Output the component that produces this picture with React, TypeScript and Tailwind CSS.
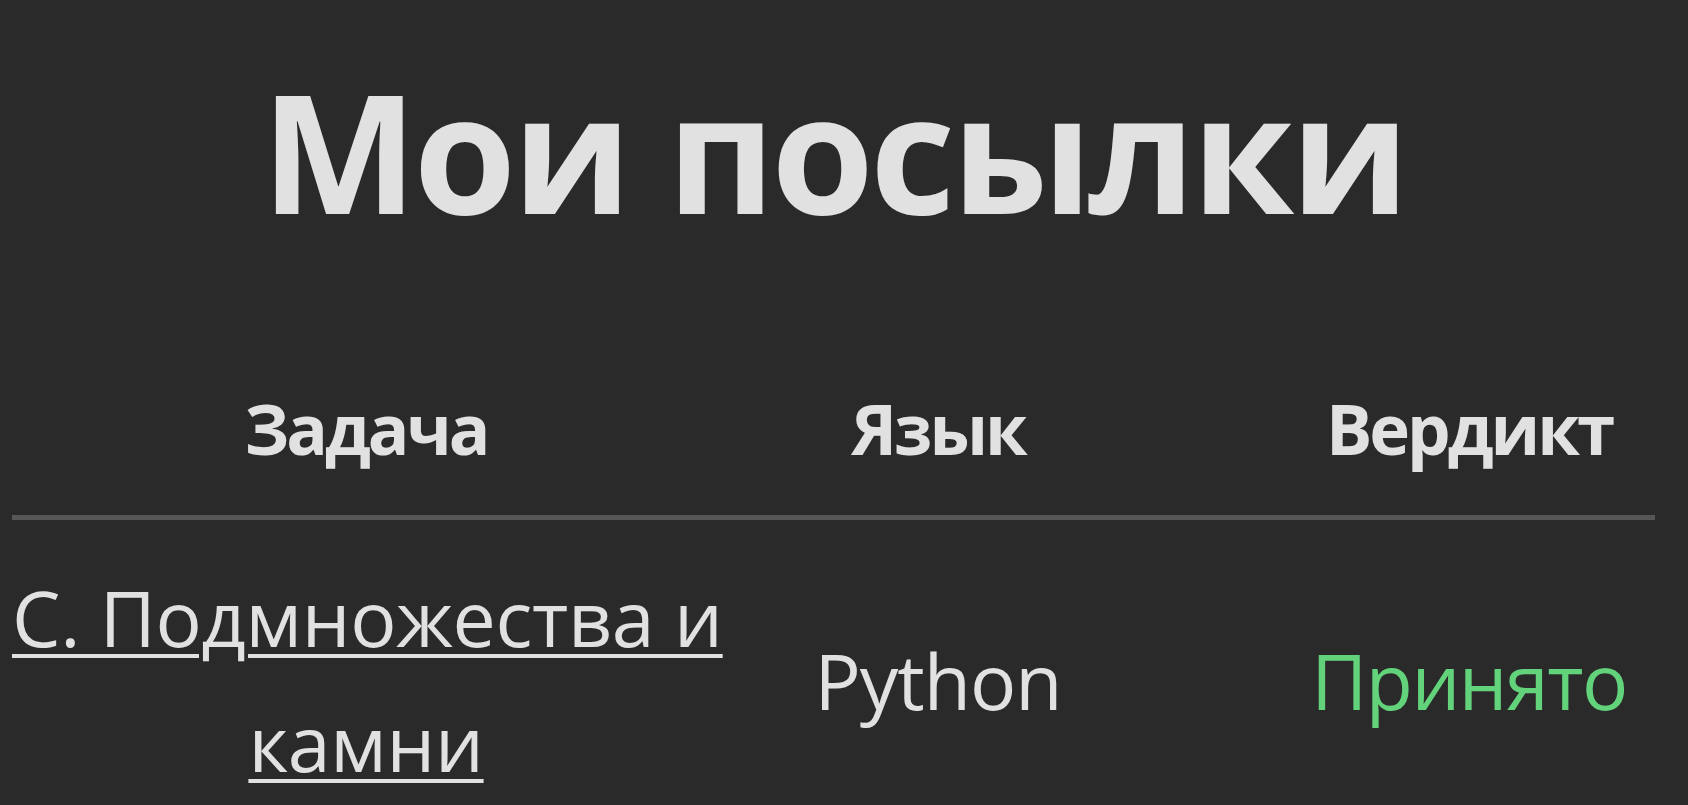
export default function App() {
  const font = { fontFamily: '"Open Sans", "Noto Sans", sans-serif' };
  return (
    <div
      className="min-h-[805px] bg-[#2a2a2a] text-[#e1e1e1] pl-[12px] pr-[33px] pt-[66px] overflow-hidden"
      style={font}
    >
      <h1 className="text-center text-[166px] leading-[168px] font-bold tracking-[-4px]">
        Мои посылки
      </h1>
      <table className="w-[1643px] mt-[158px] table-fixed border-collapse">
        <colgroup>
          <col className="w-[708px]" />
          <col className="w-[436px]" />
          <col className="w-[499px]" />
        </colgroup>
        <thead>
          <tr className="border-b-[5px] border-[#565656]">
            <th className="text-[69px] leading-[72px] font-bold tracking-[-3px] pb-[51px] text-center">
              Задача
            </th>
            <th className="text-[69px] leading-[72px] font-bold tracking-[-3px] pb-[51px] text-center">
              Язык
            </th>
            <th className="text-[69px] leading-[72px] font-bold tracking-[-3px] pb-[51px] pl-[127px] text-center">
              Вердикт
            </th>
          </tr>
        </thead>
        <tbody>
          <tr>
            <td className="text-[77px] leading-[125px] tracking-[-0.3px] pt-[35px] text-center align-middle whitespace-nowrap">
              <a
                href="#"
                className="underline decoration-[4px] underline-offset-[7px]"
              >
                С. Подмножества и
                <br />
                камни
              </a>
            </td>
            <td className="text-[77px] leading-[125px] tracking-[-1px] pt-[35px] text-center align-middle">
              Python
            </td>
            <td className="text-[77px] leading-[125px] tracking-[-1.5px] pt-[35px] pl-[127px] text-center align-middle text-[#62d37b]">
              Принято
            </td>
          </tr>
        </tbody>
      </table>
    </div>
  );
}
